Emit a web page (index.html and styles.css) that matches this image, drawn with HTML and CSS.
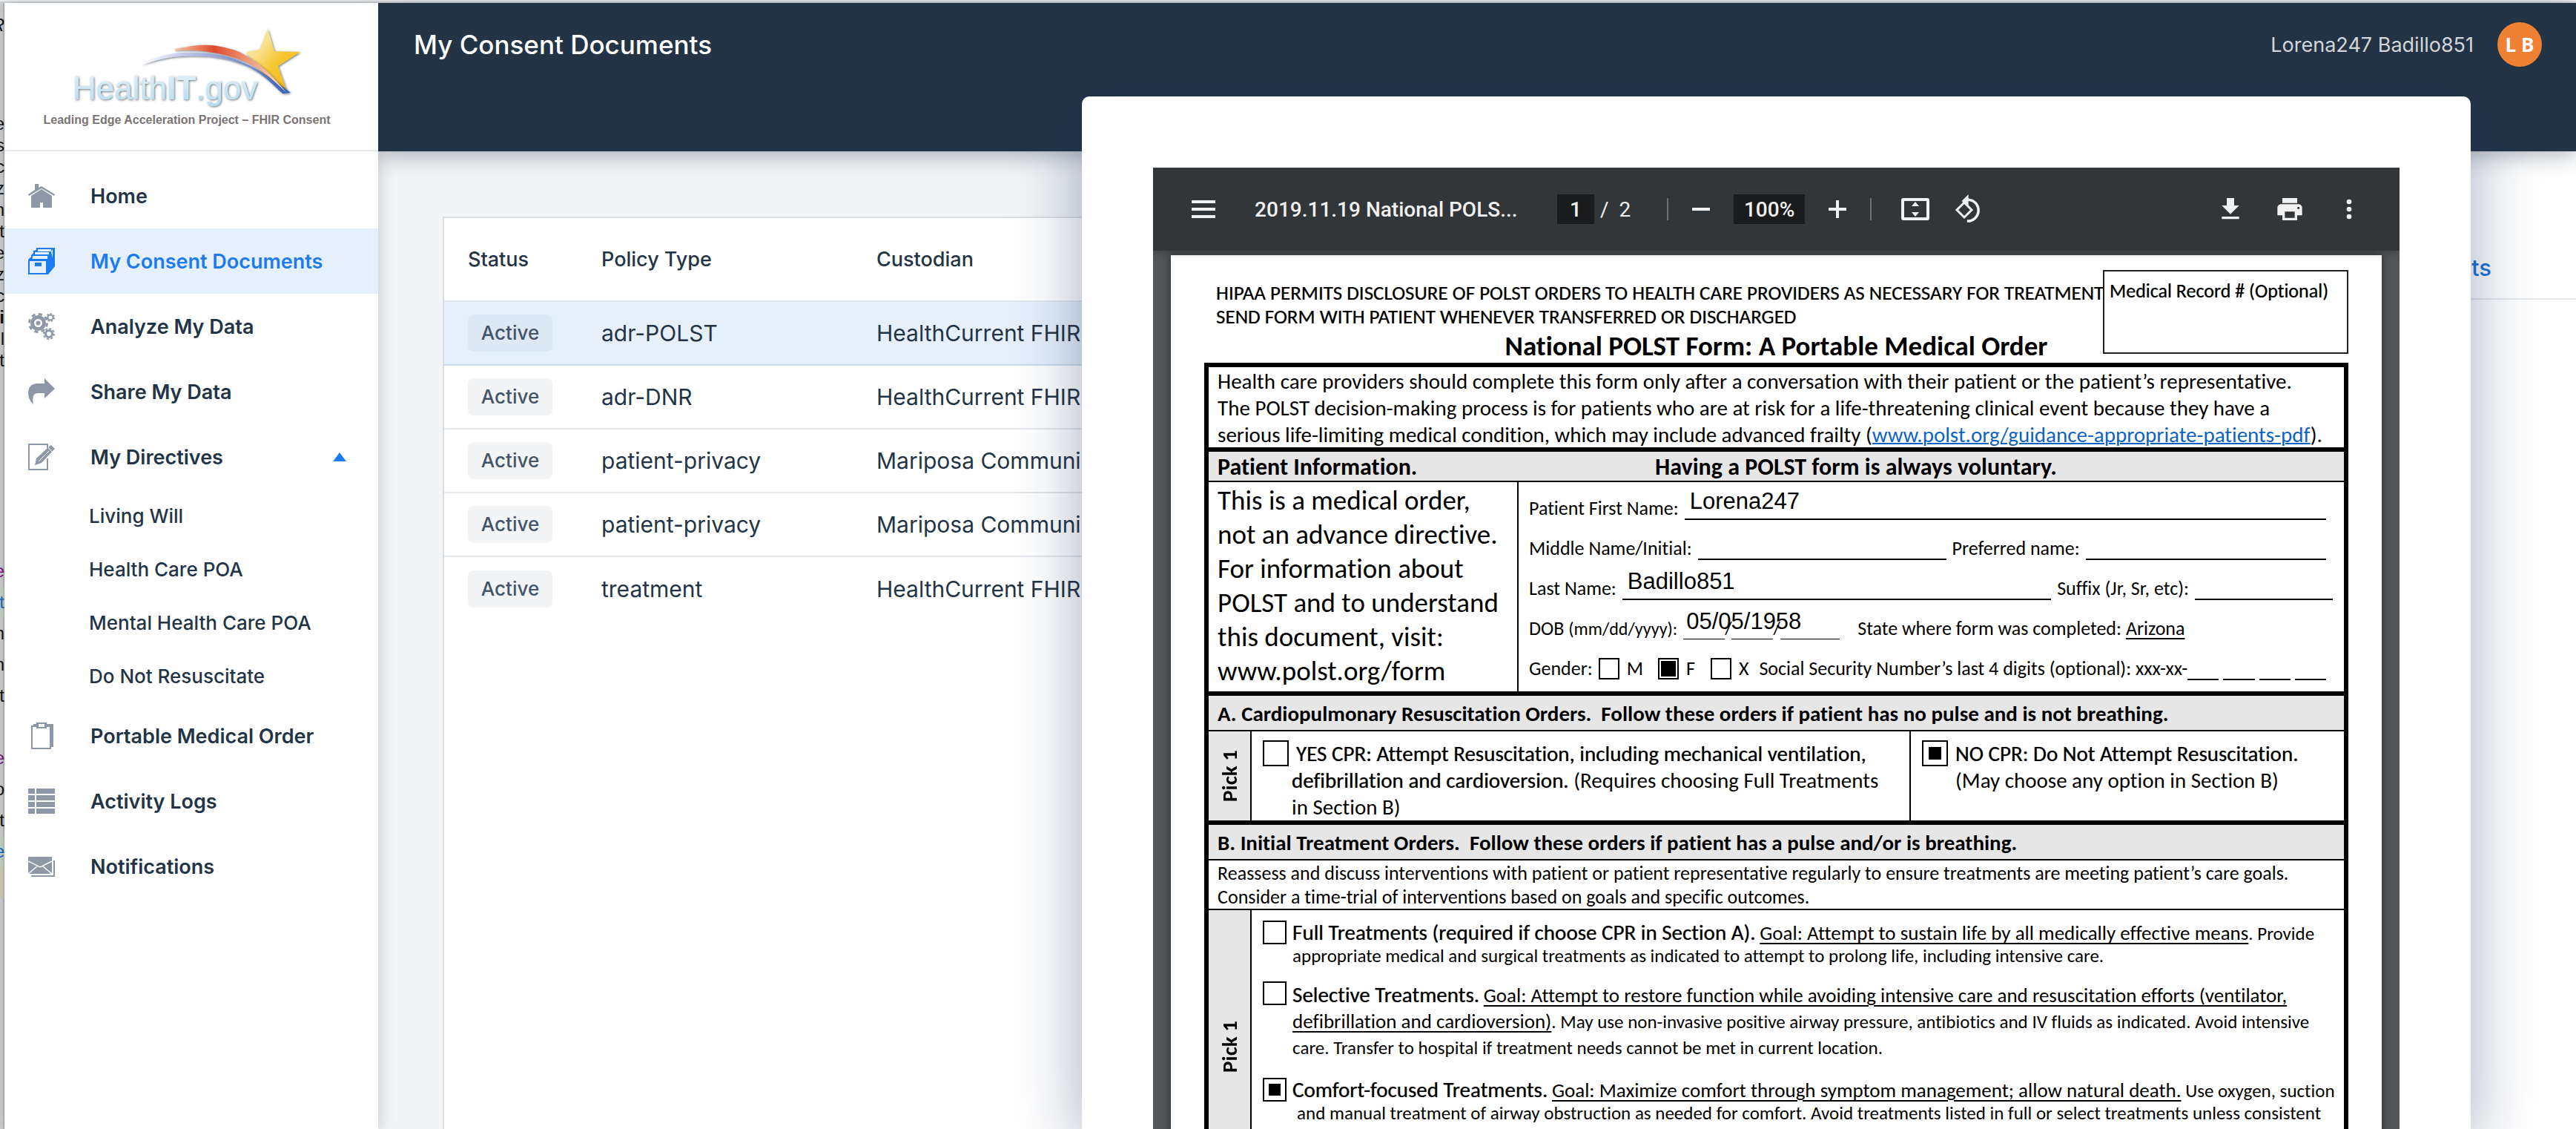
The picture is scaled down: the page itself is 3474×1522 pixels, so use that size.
FILE: index.html
```html
<!DOCTYPE html>
<html lang="en">
<head>
<meta charset="utf-8">
<title>My Consent Documents</title>
<link rel="stylesheet" href="styles.css">
</head>
<body>
<div class="window-edge"></div>
<div class="app">
  <div class="behind" aria-hidden="true">
    <p class="behind-top">R</p>
    <div class="behind-a"><p>e</p><p>s</p><p>c</p><p>z</p><p>n</p><p>t</p><p>e</p><p>z</p><p>c</p><p><b>i</b></p><p>l</p><p>t</p></div>
    <div class="behind-b"><p class="visited">e</p><p class="linked">t</p><p>m</p><p>n</p><p>t</p><p>&nbsp;</p><p class="visited">e</p><p>o</p><p>t</p><p class="linked">e</p><p class="note">&nbsp;</p></div>
  </div>

  <aside class="sidebar">
    <div class="brand">
      <svg class="logo" viewBox="0 0 504 198" role="img" aria-label="HealthIT.gov">
        <defs>
          <linearGradient id="gStar" x1="0" y1="0" x2="1" y2="1"><stop offset="0" stop-color="#fdf0b8"/><stop offset=".3" stop-color="#f9e08a"/><stop offset=".55" stop-color="#f5c630"/><stop offset="1" stop-color="#f0b41c"/></linearGradient>
          <linearGradient id="gRed" x1="0" x2="1"><stop offset="0" stop-color="#f6c4a0"/><stop offset=".35" stop-color="#df4a2c"/><stop offset=".65" stop-color="#ee9a78"/><stop offset="1" stop-color="#fbe3d4"/></linearGradient>
          <linearGradient id="gBlue" x1="0" x2="1"><stop offset="0" stop-color="#ffffff"/><stop offset=".35" stop-color="#b3bbe6"/><stop offset=".7" stop-color="#7d8fd0"/><stop offset="1" stop-color="#2f62b8"/></linearGradient>
          <linearGradient id="gText" x1="0" y1="0" x2="0" y2="1"><stop offset="0" stop-color="#e3f2f8"/><stop offset="1" stop-color="#b5dcee"/></linearGradient>
          <filter id="shade" x="-10%" y="-10%" width="120%" height="130%"><feDropShadow dx="1" dy="1" stdDeviation="1.5" flood-color="#33404c" flood-opacity=".75"/></filter>
        </defs>
        <g filter="url(#shade)"><text class="wordmark" x="92" y="130" fill="url(#gText)">Health<tspan class="wordmark-it">IT</tspan>.gov</text></g>
        <path filter="url(#shade)" fill="url(#gStar)" d="M355 35 364 65 399 66 369 85 381 119 352 98 334 78 326 66 344 63Z"/>
        <path filter="url(#shade)" fill="url(#gBlue)" d="M184 84C206 72 226 67 246 67 276 67 296 70 314 77 346 90 366 106 386 121L375 122C362 110 350 97 331 87 300 73 276 70 238 72 218 73 200 78 184 84Z"/>
        <path filter="url(#shade)" fill="url(#gRed)" d="M230 62C256 57 272 55 292 59 306 62 314 64 322 69 350 84 366 104 382 123 362 102 340 84 314 75 290 67 260 62 230 64Z"/>
        <text class="tagline" x="246" y="163" text-anchor="middle">Leading Edge Acceleration Project – FHIR Consent</text>
      </svg>
    </div>
    <nav class="nav">
      <a class="nav-item" href="#"><svg viewBox="0 0 36 36"><path d="M18 9 32 18V34H20V27H16V34H4V18Z"/><path d="M9 2h5v5l4-2 18 11-1 2-17-10L1 18 0 16 9 10Z"/></svg>Home</a>
      <a class="nav-item active" href="#"><svg viewBox="0 0 36 36"><path fill-rule="evenodd" d="M0 16 3 13H4V10L7 7V4L11 3V0H36V25L27 36H0ZM2 18V34H24V18ZM5 15H26V11H6V14ZM9 9H28L28 6H9ZM13 5H31V2H13ZM31 5 33 2 33 14ZM9 20H18V25H9Z"/></svg>My Consent Documents</a>
      <a class="nav-item" href="#"><svg viewBox="0 0 36 36"><g fill="none" stroke="currentColor"><circle cx="13.500" cy="13.500" r="8" stroke-width="5"/><circle cx="13.500" cy="13.500" r="12" stroke-width="3" stroke-dasharray="5 4.420"/><circle cx="30" cy="6" r="3.500" stroke-width="2"/><circle cx="30" cy="6" r="5" stroke-width="2" stroke-dasharray="2.400 2.100"/><circle cx="28" cy="28" r="4.500" stroke-width="3"/><circle cx="28" cy="28" r="7" stroke-width="2" stroke-dasharray="3 2.500"/></g><circle cx="13.500" cy="13.500" r="3"/></svg>Analyze My Data</a>
      <a class="nav-item" href="#"><svg viewBox="0 0 36 36"><path d="M22 0 36 14 22 27V20H13C7 20 5 26 7 35 0 29-1 20 1 14 3 9 7 7 13 7H22Z"/></svg>Share My Data</a>
      <a class="nav-item" href="#"><svg viewBox="0 0 36 36"><path fill="none" stroke="currentColor" stroke-width="2" d="M26 20V35H1V1H26V6"/><path d="M31 2 36 7 32 11 18 26 9 29 11 20 27 5Z"/><path fill="none" stroke="#fff" stroke-width="1" d="M27 5 32 11M14 24 28 10"/></svg>My Directives<i class="caret"></i></a>
      <a class="nav-sub" href="#">Living Will</a>
      <a class="nav-sub" href="#">Health Care POA</a>
      <a class="nav-sub" href="#">Mental Health Care POA</a>
      <a class="nav-sub" href="#">Do Not Resuscitate</a>
      <a class="nav-item" href="#"><svg viewBox="0 0 36 36"><path fill-rule="evenodd" d="M11 0H25V2H34V33H31V36H4V4H7V2H11ZM6 6V34H29V6H25V8H11V6ZM14 2V6H22V2Z"/></svg>Portable Medical Order</a>
      <a class="nav-item" href="#"><svg viewBox="0 0 36 36"><path d="M0 1H9V8H0ZM11 1H36V8H11ZM0 10H9V17H0ZM11 10H36V17H11ZM0 19H9V26H0ZM11 19H36V26H11ZM0 28H9V35H0ZM11 28H36V35H11Z"/></svg>Activity Logs</a>
      <a class="nav-item" href="#"><svg viewBox="0 0 36 36"><path d="M0 5H32V28H0Z"/><path fill="none" stroke="#fff" stroke-width="1.500" d="M0 11 16 19 32 11M0 28 12 18M32 28 20 18"/><path fill="none" stroke="currentColor" stroke-width="2" d="M4 31H35V10"/></svg>Notifications</a>
    </nav>
  </aside>

  <main class="main">
    <header class="topbar">
      <h1>My Consent Documents</h1>
      <div class="user"><span>Lorena247 Badillo851</span><span class="avatar">L B</span></div>
    </header>
    <div class="content">
      <section class="list">
        <table class="docs">
          <colgroup><col class="c-status"><col class="c-type"><col></colgroup>
          <thead><tr><th>Status</th><th>Policy Type</th><th>Custodian</th></tr></thead>
          <tbody>
            <tr class="selected"><td><span class="badge">Active</span></td><td>adr-POLST</td><td>HealthCurrent FHIR</td></tr>
            <tr><td><span class="badge">Active</span></td><td>adr-DNR</td><td>HealthCurrent FHIR</td></tr>
            <tr><td><span class="badge">Active</span></td><td>patient-privacy</td><td>Mariposa Communi</td></tr>
            <tr><td><span class="badge">Active</span></td><td>patient-privacy</td><td>Mariposa Communi</td></tr>
            <tr><td><span class="badge">Active</span></td><td>treatment</td><td>HealthCurrent FHIR</td></tr>
          </tbody>
        </table>
      </section>
      <section class="detail"><div class="tabs"><a href="#">ts</a></div></section>
    </div>
  </main>
</div>

<div class="dialog" role="dialog" aria-label="Document">
  <div class="viewer">
    <div class="toolbar">
      <button class="tool menu" aria-label="Menu"><svg viewBox="0 0 48 48"><path d="M8 12H40V16H8ZM8 22H40V26H8ZM8 32H40V36H8Z"/></svg></button>
      <span class="file">2019.11.19 National POLS...</span>
      <input class="box page-no" aria-label="Page" value="1"><span class="pages">/&nbsp; 2</span>
      <i class="rule"></i>
      <button class="tool" aria-label="Zoom out"><svg viewBox="0 0 48 48"><path d="M12 22H36V26H12Z"/></svg></button>
      <input class="box zoom" aria-label="Zoom" value="100%">
      <button class="tool" aria-label="Zoom in"><svg viewBox="0 0 48 48"><path d="M22 12H26V22H36V26H26V36H22V26H12V22H22Z"/></svg></button>
      <i class="rule near"></i>
      <button class="tool fit" aria-label="Fit to page"><svg viewBox="0 0 48 48"><path fill-rule="evenodd" d="M8 9H40Q43 9 43 12V36Q43 39 40 39H8Q5 39 5 36V12Q5 9 8 9ZM9 13V35H39V13ZM24 14 29 20H19ZM24 34 19 28H29Z"/></svg></button>
      <button class="tool" aria-label="Rotate"><svg viewBox="0 0 48 48"><path d="M24 6V0L14 10 24 20V10A14 14 0 1 1 22 38V42A18 18 0 1 0 24 6Z" transform="translate(2 4) scale(.9)"/><path fill="none" stroke="currentColor" stroke-width="3" d="M18 15 28 25 18 35 8 25Z"/></svg></button>
      <span class="grow"></span>
      <button class="tool end" aria-label="Download"><svg viewBox="0 0 48 48"><path d="M38 18H30V6H18V18H10L24 32ZM10 36V40H38V36Z"/></svg></button>
      <button class="tool end" aria-label="Print"><svg viewBox="0 0 48 48"><path fill-rule="evenodd" d="M38 16H10C6.700 16 4 18.700 4 22V34H12V42H36V34H44V22C44 18.700 41.300 16 38 16ZM32 38H16V28H32ZM38 24A2 2 0 1 1 38 20 2 2 0 0 1 38 24ZM36 6H12V14H36Z"/></svg></button>
      <button class="tool end" aria-label="More"><svg viewBox="0 0 48 48"><circle cx="24" cy="12" r="4"/><circle cx="24" cy="24" r="4"/><circle cx="24" cy="36" r="4"/></svg></button>
    </div>
    <article class="paper">
      <div class="head">
        <div class="hipaa"><p>HIPAA PERMITS DISCLOSURE OF POLST ORDERS TO HEALTH CARE PROVIDERS AS NECESSARY FOR TREATMENT</p><p>SEND FORM WITH PATIENT WHENEVER TRANSFERRED OR DISCHARGED</p></div>
        <div class="record">Medical Record # (Optional)</div>
        <h2>National POLST Form: A Portable Medical Order</h2>
      </div>
      <div class="form">
        <div class="intro">
          <p>Health care providers should complete this form only after a conversation with their patient or the patient’s representative.</p>
          <p>The POLST decision-making process is for patients who are at risk for a life-threatening clinical event because they have a</p>
          <p>serious life-limiting medical condition, which may include advanced frailty (<a href="#">www.polst.org/guidance-appropriate-patients-pdf</a>).</p>
        </div>
        <div class="bar bar-patient"><h3>Patient Information.</h3><h3>Having a POLST form is always voluntary.</h3></div>
        <div class="patient">
          <div class="about"><p>This is a medical order,</p><p>not an advance directive.</p><p>For information about</p><p>POLST and to understand</p><p>this document, visit:</p><p>www.polst.org/form</p></div>
          <div class="fields">
            <div class="row"><label for="fn">Patient First Name:</label><input id="fn" class="line" value="Lorena247"></div>
            <div class="row"><label for="mn">Middle Name/Initial:</label><input id="mn" class="line middle"><label for="pn">Preferred name:</label><input id="pn" class="line"></div>
            <div class="row row-wide"><label for="ln">Last Name:</label><input id="ln" class="line" value="Badillo851"><label for="sx">Suffix (Jr, Sr, etc):</label><input id="sx" class="line suffix"></div>
            <div class="row"><label for="dob">DOB <small>(mm/dd/yyyy):</small></label><span class="dob"><span class="mask" aria-hidden="true"><i></i>/<i></i>/<i class="year"></i></span><input id="dob" class="line" value="05/05/1958"></span><span class="state">State where form was completed: <u>Arizona</u></span></div>
            <div class="row gender"><span>Gender:</span><label class="sex"><input type="checkbox" class="tick">M</label><label class="sex f"><input type="checkbox" class="tick filled" checked>F</label><label class="sex"><input type="checkbox" class="tick">X</label><label for="ssn" class="ssn">Social Security Number’s last 4 digits (optional): xxx-xx-</label><span class="digits"><input id="ssn" class="line"><input class="line" aria-label="Second digit"><input class="line" aria-label="Third digit"><input class="line" aria-label="Fourth digit"></span></div>
          </div>
        </div>
        <div class="bar"><h3>A. Cardiopulmonary Resuscitation Orders.&nbsp; Follow these orders if patient has no pulse and is not breathing.</h3></div>
        <div class="orders cpr">
          <div class="pick"><span>Pick 1</span></div>
          <div class="opt opt-yes"><input type="checkbox" class="tick" id="yes"><label for="yes"><span class="ln first"><strong>YES CPR: Attempt Resuscitation, including mechanical ventilation,</strong></span><span class="ln"><strong>defibrillation and cardioversion.</strong> (Requires choosing Full Treatments</span><span class="ln">in Section B)</span></label></div>
          <div class="opt"><input type="checkbox" class="tick" id="no" checked><label for="no"><span class="ln"><strong>NO CPR: Do Not Attempt Resuscitation.</strong></span><span class="ln">(May choose any option in Section B)</span></label></div>
        </div>
        <div class="bar"><h3>B. Initial Treatment Orders.&nbsp; Follow these orders if patient has a pulse and/or is breathing.</h3></div>
        <div class="reassess"><p>Reassess and discuss interventions with patient or patient representative regularly to ensure treatments are meeting patient’s care goals.</p><p>Consider a time-trial of interventions based on goals and specific outcomes.</p></div>
        <div class="orders treatments">
          <div class="pick"><span>Pick 1</span></div>
          <div class="choices">
            <div class="opt"><input type="checkbox" class="tick" id="full"><label for="full"><span class="ln"><strong>Full Treatments (required if choose CPR in Section A).</strong> <u>Goal: Attempt to sustain life by all medically effective means</u>. Provide</span><span class="ln">appropriate medical and surgical treatments as indicated to attempt to prolong life, including intensive care.</span></label></div>
            <div class="opt opt-selective"><input type="checkbox" class="tick" id="sel"><label for="sel"><span class="ln"><strong>Selective Treatments.</strong> <u>Goal: Attempt to restore function while avoiding intensive care and resuscitation efforts (ventilator,</u></span><span class="ln"><u>defibrillation and cardioversion)</u>. May use non-invasive positive airway pressure, antibiotics and IV fluids as indicated. Avoid intensive</span><span class="ln">care. Transfer to hospital if treatment needs cannot be met in current location.</span></label></div>
            <div class="opt"><input type="checkbox" class="tick" id="comf" checked><label for="comf"><span class="ln"><strong>Comfort-focused Treatments.</strong> <u>Goal: Maximize comfort through symptom management; allow natural death.</u> Use oxygen, suction</span><span class="ln first">and manual treatment of airway obstruction as needed for comfort. Avoid treatments listed in full or select treatments unless consistent</span></label></div>
          </div>
        </div>
      </div>
    </article>
  </div>
</div>
</body>
</html>
```
FILE: styles.css
```css
* { box-sizing: border-box; }
body { margin: 0; height: 100vh; overflow: hidden; position: relative; display: flex; flex-direction: column; background: #fff; color: #243447; font-family: Inter, "Open Sans", sans-serif; }
h1, h2, h3, p { margin: 0; }
a { color: inherit; text-decoration: none; }
button, input { font: inherit; color: inherit; margin: 0; padding: 0; border: 0; background: none; border-radius: 0; }
svg { display: block; fill: currentColor; }

.window-edge { flex: none; height: 4px; background: #f2f2f2; border-bottom: 2px solid #d3d6d9; }
.app { flex: 1; min-height: 0; display: flex; }

/* sliver of the window behind */
.behind { flex: none; width: 6px; overflow: hidden; display: flex; flex-direction: column; background: linear-gradient(90deg, #d2d2d2 60%, #a4a4a4); color: #111; font: 24px "Liberation Sans", sans-serif; }
.behind p { display: flex; justify-content: flex-end; line-height: inherit; }
.behind .behind-top { line-height: 60px; font-style: italic; }
.behind-a { padding-top: 88px; line-height: 29px; }
.behind-b { padding-top: 249px; line-height: 42px; }
.behind .visited { color: #7b1082; }
.behind .linked { color: #1767c0; background: rgba(190, 215, 190, .5); }
.behind .note { background: rgba(215, 205, 170, .5); }

.sidebar { flex: none; width: 504px; background: #fff; position: relative; z-index: 2; box-shadow: 0 0 20px rgba(36, 52, 71, .25); }
.brand { border-bottom: 2px solid #e6e8ed; }
.logo { width: 100%; height: 198px; }
.wordmark { font: 44px "Liberation Sans", sans-serif; }
.wordmark-it { font-weight: 700; }
.tagline { font: 700 16px "Liberation Sans", sans-serif; fill: #7a7473; }
.nav { padding-top: 16px; }
.nav-item { display: flex; align-items: center; gap: 48px; height: 88px; padding: 0 43px 0 32px; font-size: 27px; font-weight: 600; }
.nav-item svg { width: 36px; height: 36px; color: #8d97a5; }
.nav-item.active { background: #e6f0fc; color: #1d7bf0; }
.nav-item.active svg { color: #1d7bf0; }
.nav-sub { display: block; padding-left: 114px; line-height: 72px; font-size: 26px; font-weight: 500; }
.caret { margin-left: auto; border: 9px solid transparent; border-top: 0; border-bottom: 12px solid #1d7bf0; }

.main { flex: 1; min-width: 0; display: flex; flex-direction: column; background: #f2f4f6; }
.topbar { flex: none; height: 200px; padding: 26px 46px 0 48px; display: flex; align-items: flex-start; justify-content: space-between; background: #243447; color: #fff; position: relative; z-index: 1; box-shadow: 0 4px 30px rgba(36, 52, 71, .4); }
.topbar h1 { font-size: 35px; line-height: 60px; font-weight: 500; }
.user { display: flex; align-items: center; gap: 32px; font-size: 27px; color: #d3d7db; }
.avatar { width: 60px; height: 60px; border-radius: 50%; background: #f08033; color: #fff; font: 700 26px/60px "Open Sans", sans-serif; text-align: center; }
.content { flex: 1; display: flex; }
.list { flex: 1; margin: 88px 0 0 87px; background: #fff; border: 2px solid #d9dee3; border-bottom: 0; }
.docs { width: 100%; table-layout: fixed; border-collapse: collapse; font-size: 30px; }
.c-status { width: 212px; }
.c-type { width: 371px; }
.docs th, .docs td { text-align: left; padding: 0; border-bottom: 2px solid #e4e8ed; white-space: nowrap; }
.docs th:first-child, .docs td:first-child { padding-left: 32px; }
.docs th { height: 112px; font-size: 27px; font-weight: 500; }
.docs td { height: 86px; }
.docs tr:last-child td { border-bottom: 0; }
.docs .selected td { background: #e6f0fb; border-color: #cbdaed; }
.badge { display: block; width: 114px; border-radius: 8px; background: #f2f4f6; color: #44546a; font-size: 26px; line-height: 50px; font-weight: 500; text-align: center; }
.selected .badge { background: #dce8f4; }
.detail { width: 320px; background: #fff; }
.tabs { height: 200px; padding: 132px 114px 0 0; border-bottom: 2px solid #e4e9ee; text-align: right; font-size: 31px; line-height: 50px; font-weight: 500; color: #1d73d8; }

.dialog { position: absolute; z-index: 5; top: 130px; right: 142px; bottom: 0; left: 42%; display: flex; padding: 96px 96px 0; border-radius: 10px 10px 0 0; background: #fff; box-shadow: 0 20px 90px rgba(26, 44, 84, .4); }
.viewer { flex: 1; min-width: 0; overflow: hidden; display: flex; flex-direction: column; background: #525659; }
.toolbar { flex: none; position: relative; z-index: 1; display: flex; align-items: center; height: 112px; padding: 0 44px; background: #323639; color: #f1f1f1; font: 500 28px Roboto, sans-serif; box-shadow: 0 0 12px rgba(0, 0, 0, .4); }
.tool { flex: none; display: block; width: 48px; margin: 0 12px; }
.tool svg { width: 48px; height: 48px; }
.tool.menu { margin: 0 45px 0 0; }
.tool.fit { margin-left: 41px; }
.tool.end { margin: 0 0 0 32px; }
.tool.end svg { width: 40px; height: 40px; margin: 0 auto; }
.file { width: 408px; white-space: nowrap; }
.box { height: 40px; background: #1a1b1c; text-align: center; }
.page-no { width: 50px; }
.pages { width: 90px; padding-left: 8px; font-weight: 400; }
.rule { width: 2px; height: 30px; background: #6c7073; margin: 0 8px; }
.rule.near { margin: 0 -6px 0 8px; }
.zoom { width: 96px; margin: 0 8px; }
.grow { flex: 1; }

/* the document itself */
.paper { flex: none; margin: 6px 24px 0; padding: 20px 45px 0; background: #fff; color: #000; font: 27px Carlito, Lato, sans-serif; font-variant-ligatures: none; white-space: nowrap; box-shadow: 0 0 10px rgba(0, 0, 0, .5); }
.head { display: grid; grid-template-columns: minmax(0, 1fr) 331px; grid-template-rows: 79px 46px; }
.hipaa { padding: 15px 0 0 16px; line-height: 32px; text-shadow: 0 0 1px rgba(0, 0, 0, .5); }
.record { grid-column: 2; grid-row: 1 / 3; height: 113px; padding: 10px 7px; border: 2px solid #222; font-size: 26px; line-height: 32px; text-shadow: 0 0 1px rgba(0, 0, 0, .5); }
.head h2 { grid-column: 1 / 3; grid-row: 2; text-align: center; font-size: 37px; line-height: 48px; }
.form { border: 6px solid #000; border-bottom: 0; }
.intro { height: 108px; padding: 1px 0 0 12px; font-size: 29px; line-height: 36px; }
.intro a { color: #0d63c2; text-decoration: underline; text-decoration-thickness: 2px; }
.bar { height: 54px; padding-left: 12px; background: #e6e6e6; border-top: 6px solid #000; border-bottom: 2px solid #000; line-height: 48px; }
.bar h3 { font-size: 29px; }
.bar-patient { height: 47px; display: grid; grid-template-columns: 590px 1fr; line-height: 42px; }
.bar-patient h3 { font-size: 32px; }
.patient { display: grid; grid-template-columns: 418px minmax(0, 1fr); height: 282px; }
.about { padding: 2px 0 0 12px; border-right: 2px solid #000; font-size: 37px; line-height: 46px; }
.fields { padding: 8px 0 0 14px; font-size: 26px; }
.row { display: flex; gap: 8px; height: 54px; padding-right: 24px; line-height: 54px; }
.row-wide { padding-right: 15px; }
.row small { font-size: 24px; }
.line { flex: 1; min-width: 0; height: 43px; padding: 0 0 5px 7px; border-bottom: 2px solid #000; font: 31px "Liberation Sans", sans-serif; }
.line.middle { flex: none; width: 335px; }
.line.suffix { flex: none; width: 186px; }
.dob { width: 217px; display: grid; }
.dob > * { grid-area: 1 / 1; }
.dob .line { border-bottom-color: transparent; padding-left: 4px; }
.mask { display: flex; font-size: 24px; }
.mask i { flex: none; width: 56px; height: 42px; border-bottom: 1px solid #000; }
.mask .year { width: 80px; }
.state { margin-left: 10px; }
.row u { text-underline-offset: 4px; text-decoration-thickness: 2px; }
.sex { display: flex; align-items: center; gap: 10px; }
.sex.f { margin: 0 13px 0 12px; }
.ssn { margin-left: 6px; }
.digits { flex: 1; min-width: 0; display: flex; gap: 6px; margin-left: -8px; }
.digits .line { padding-left: 0; }
.tick { appearance: none; flex: none; width: 28px; height: 29px; border: 2px solid #000; background: #fff; }
.tick.filled { padding: 2px; background: #000 content-box; }

.orders { display: grid; grid-template-columns: 58px minmax(0, 1fr); }
.orders.cpr { grid-template-columns: 58px 889px minmax(0, 1fr); height: 120px; }
.pick { display: flex; align-items: center; justify-content: center; background: #e6e6e6; border-right: 2px solid #000; font-size: 29px; font-weight: 700; }
.pick span { writing-mode: vertical-rl; transform: rotate(180deg); }
.opt { display: grid; grid-template-columns: 40px minmax(0, 1fr); padding-left: 15px; }
.opt .tick { width: 32px; height: 32px; }
.opt .tick:checked { padding: 6px; background: #000 content-box; }
.cpr .opt { padding-top: 12px; grid-template-columns: 45px minmax(0, 1fr); font-size: 29px; }
.cpr .opt-yes { grid-template-columns: 39px minmax(0, 1fr); border-right: 2px solid #000; }
.cpr .opt .tick { width: 35px; height: 35px; }
.cpr .opt .tick:checked { padding: 7px; }
.ln { display: block; height: 32px; line-height: 32px; }
.cpr .ln, .opt-selective .ln { height: 36px; line-height: 36px; }
.first { padding-left: 6px; }
strong { font-weight: 400; font-size: 29px; text-shadow: 0 0 1px rgba(0, 0, 0, .6); }
.reassess { height: 67px; padding: 1px 0 0 12px; border-bottom: 2px solid #000; font-size: 26px; line-height: 32px; }
.treatments { height: 368px; }
.choices { display: flex; flex-direction: column; gap: 18px; padding-top: 14px; }
.treatments .opt { font-size: 25px; }
.treatments .opt-selective { padding-bottom: 4px; }
.treatments u { font-size: 27px; text-underline-offset: 4px; text-decoration-thickness: 2px; }
```
